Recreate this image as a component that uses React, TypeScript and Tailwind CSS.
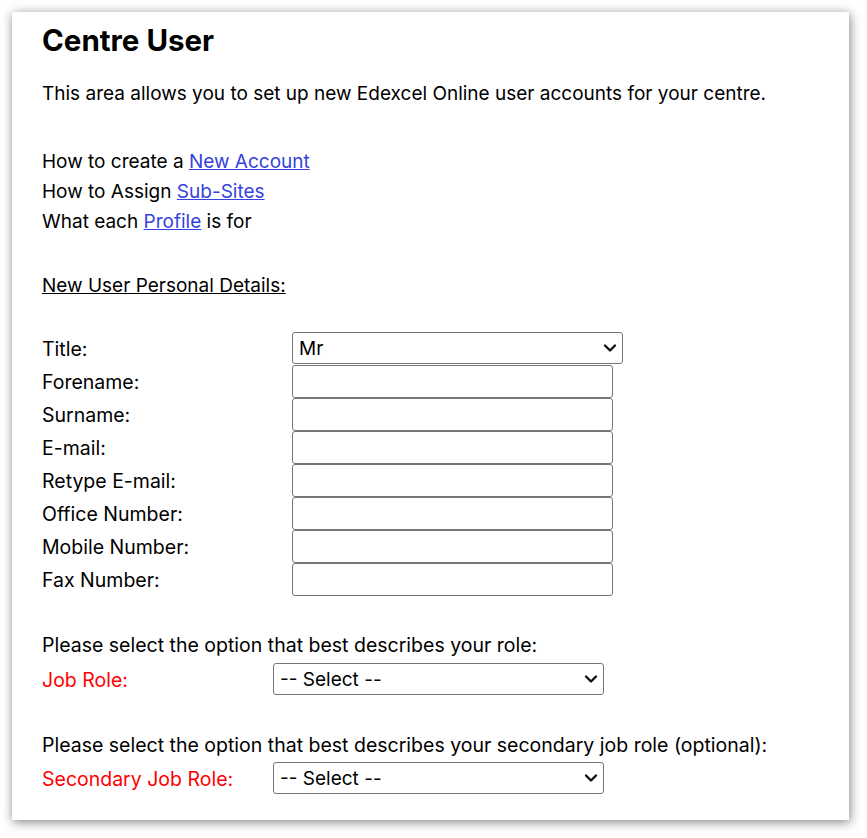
import React from 'react';

const font = { fontFamily: 'Inter, "Liberation Sans", sans-serif' };

const Chevron = () => (
  <svg
    className="pointer-events-none absolute right-[6px] top-1/2 -translate-y-1/2"
    width="14"
    height="9"
    viewBox="0 0 14 9"
    fill="none"
    stroke="#111"
    strokeWidth="2.4"
    strokeLinecap="round"
    strokeLinejoin="round"
  >
    <path d="M2 2l5 5 5-5" />
  </svg>
);

const Select: React.FC<{ value: string; options: string[]; width: string }> = ({ value, options, width }) => (
  <div className={`relative ${width}`}>
    <select
      defaultValue={value}
      className="h-[32px] w-full appearance-none rounded-[3px] border border-[#767676] bg-white pl-[6px] pt-[2px] text-[19px] text-black"
    >
      {options.map((o) => (
        <option key={o}>{o}</option>
      ))}
    </select>
    <Chevron />
  </div>
);

const fields = ['Forename:', 'Surname:', 'E-mail:', 'Retype E-mail:', 'Office Number:', 'Mobile Number:', 'Fax Number:'];

export default function App() {
  return (
    <div className="min-h-screen bg-white pl-3 pt-3" style={font}>
      <div className="h-[808px] w-[837px] bg-white pl-[30px] pt-[10px] text-[19px] text-black shadow-[1px_2px_10px_rgba(0,0,0,0.5)]">
        <h1 className="text-[29.5px] font-bold leading-[36px]">Centre User</h1>
        <p className="mt-[21px] leading-[30px]">
          This area allows you to set up new Edexcel Online user accounts for your centre.
        </p>

        <div className="mt-[38px] leading-[30px]">
          <div>
            How to create a <a href="#" className="text-[#3443dd] underline">New Account</a>
          </div>
          <div>
            How to Assign <a href="#" className="text-[#3443dd] underline">Sub-Sites</a>
          </div>
          <div>
            What each <a href="#" className="text-[#3443dd] underline">Profile</a> is for
          </div>
        </div>

        <p className="mt-[34px] leading-[30px] underline">New User Personal Details:</p>

        <div className="mt-[31px] text-[19.5px]">
          <div className="mb-px flex h-[32px] items-center">
            <span className="w-[250px] pt-[4px]">Title:</span>
            <Select value="Mr" options={['Mr', 'Mrs', 'Miss', 'Ms', 'Dr']} width="w-[331px]" />
          </div>
          {fields.map((f) => (
            <div key={f} className="flex h-[33px] items-center">
              <span className="w-[250px] pt-[3px]">{f}</span>
              <input
                type="text"
                className="h-[33px] w-[321px] rounded-[3px] border border-[#767676] bg-white px-1 text-[19px]"
              />
            </div>
          ))}
        </div>

        <p className="mt-[34px] text-[19.5px] leading-[30px]">Please select the option that best describes your role:</p>
        <div className="mt-[3px] flex h-[32px] items-center text-[19.5px]">
          <span className="w-[231px] pt-[3px] text-[#ff0000]">Job Role:</span>
          <Select value="-- Select --" options={['-- Select --']} width="w-[331px]" />
        </div>

        <p className="mt-[35px] text-[19.5px] leading-[30px]">
          Please select the option that best describes your secondary job role (optional):
        </p>
        <div className="mt-[2px] flex h-[32px] items-center text-[19.5px]">
          <span className="w-[231px] pt-[3px] text-[#ff0000]">Secondary Job Role:</span>
          <Select value="-- Select --" options={['-- Select --']} width="w-[331px]" />
        </div>
      </div>
    </div>
  );
}
